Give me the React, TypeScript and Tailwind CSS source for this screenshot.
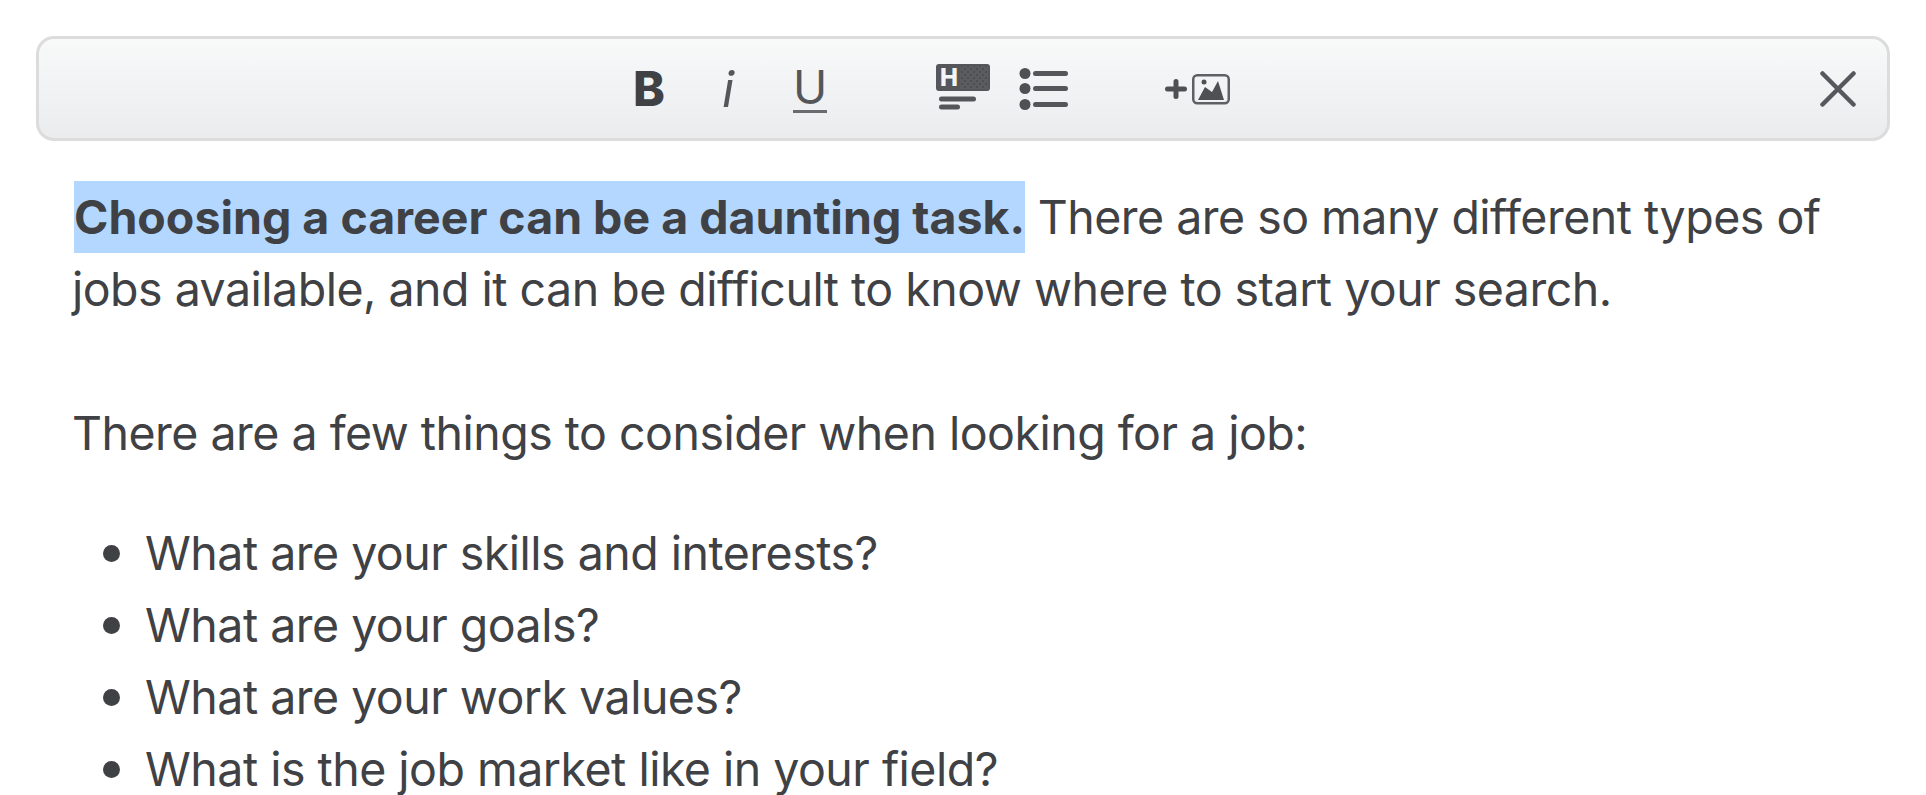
import React from 'react';

const Toolbar = () => (
  <div className="h-[105px] rounded-[18px] border-[3px] border-[#dcdcdc] bg-gradient-to-b from-[#f8f9f9] to-[#ebecee] flex items-center pl-[594px] pr-[31px] text-[#404144]">
    <span className="w-[32px] text-center text-[48px] leading-none font-extrabold">B</span>
    <span className="ml-[56px] w-[14px] text-center text-[50px] leading-none italic font-normal text-[#55565a]">i</span>
    <span className="ml-[59px] w-[32px] flex justify-center">
      <span className="text-[46px] leading-[46px] font-normal border-b-[3px] border-[#6a6b6f] text-[#55565a]">U</span>
    </span>
    <svg className="ml-[110px] -mt-[3px]" width="54" height="46" viewBox="0 0 54 46">
      <defs>
        <pattern id="dots" width="6" height="6" patternUnits="userSpaceOnUse">
          <rect width="6" height="6" fill="#5b5c60" />
          <circle cx="2" cy="2" r="1" fill="#48494d" />
          <circle cx="5" cy="5" r="1" fill="#48494d" />
        </pattern>
      </defs>
      <rect x="0" y="0" width="54" height="27" rx="3" fill="#55565a" />
      <rect x="24" y="2" width="28" height="23" fill="url(#dots)" />
      <text x="13" y="22" textAnchor="middle" fontSize="24" fontWeight="800" fontFamily="Inter, sans-serif" fill="#f3f4f5">H</text>
      <path d="M5.500 35h32M5.500 43h16" stroke="#55565a" strokeWidth="5" strokeLinecap="round" />
    </svg>
    <svg className="ml-[29px]" width="50" height="44" viewBox="0 0 50 44">
      <circle cx="6" cy="6.500" r="5.500" fill="#4f5054" />
      <circle cx="6" cy="21.500" r="5.500" fill="#4f5054" />
      <circle cx="6" cy="37.500" r="5.500" fill="#4f5054" />
      <path d="M16.500 6.500h30M16.500 21.500h30M16.500 37.500h30" stroke="#55565a" strokeWidth="5" strokeLinecap="round" />
    </svg>
    <svg className="ml-[95px]" width="66" height="32" viewBox="0 0 66 32">
      <path d="M3.500 16h17M12 8.500v15" stroke="#4f5054" strokeWidth="5" strokeLinecap="round" />
      <rect x="29.250" y="2.250" width="35.500" height="28" rx="4" fill="none" stroke="#5f6064" strokeWidth="2.500" />
      <path d="M34 27l7-13 7 5 6-11 6 19z" fill="#4f5054" />
      <circle cx="40" cy="9" r="2.500" fill="#4f5054" />
    </svg>
    <svg className="ml-auto" width="36" height="36" viewBox="0 0 36 36">
      <path d="M2.500 2.500l31 31M33.500 2.500l-31 31" stroke="#55585c" strokeWidth="4.500" strokeLinecap="round" />
    </svg>
  </div>
);

const items = [
  'What are your skills and interests?',
  'What are your goals?',
  'What are your work values?',
  'What is the job market like in your field?',
];

export default function App() {
  return (
    <div className="h-[795px] overflow-hidden bg-white px-[36px] pt-[36px] font-['Inter',sans-serif] text-[#404144]">
      <Toolbar />
      <div className="pl-[36px] pt-[40px] text-[46.500px] leading-[72px] tracking-[-0.011em] whitespace-nowrap">
        <p>
          <span className="bg-[#b3d7ff] font-bold tracking-normal py-[8px] ml-[2px]">Choosing a career can be a daunting task.</span> There are so many different types of
        </p>
        <p>jobs available, and it can be difficult to know where to start your search.</p>
        <p className="mt-[72px]">There are a few things to consider when looking for a job:</p>
        <ul className="mt-[48px] pl-[31px]">
          {items.map(item => (
            <li key={item} className="flex items-center gap-[25px]">
              <span className="w-[17px] h-[17px] rounded-full bg-[#404144] shrink-0" />
              {item}
            </li>
          ))}
        </ul>
      </div>
    </div>
  );
}
